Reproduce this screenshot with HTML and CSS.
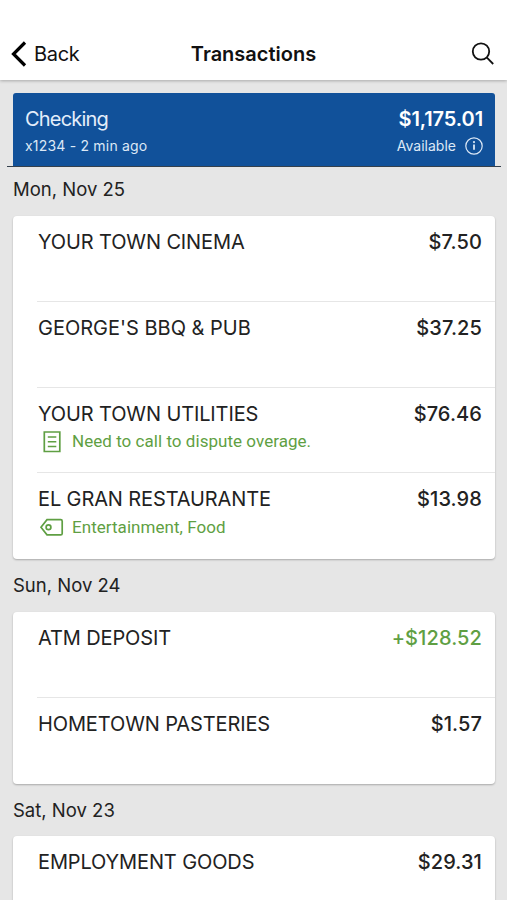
FILE: index.html
```html
<!DOCTYPE html>
<html lang="en">
<head>
<meta charset="utf-8">
<title>Transactions</title>
<link rel="stylesheet" href="styles.css">
</head>
<body>
<header class="topbar">
  <div class="back"><svg width="16" height="26" viewBox="0 0 16 26"><path d="M14 1.5 2.5 13 14 24.5"/></svg><span>Back</span></div>
  <h1>Transactions</h1>
  <svg class="search" width="24" height="24" viewBox="0 0 24 24"><circle cx="10" cy="9.5" r="8.2"/><path d="m15.7 15.3 6.5 6.7"/></svg>
</header>
<main>
  <section class="account">
    <div class="line primary"><span class="name">Checking</span><strong>$1,175.01</strong></div>
    <div class="line secondary"><span class="updated">x1234 - 2 min ago</span><span class="available"><span>Available</span><svg width="18" height="18" viewBox="0 0 18 18"><circle cx="9" cy="9" r="8.2"/><path class="stem" d="M9 7.5v5.3"/><circle class="dot" cx="9" cy="5.1" r="1.1"/></svg></span></div>
  </section>
  <h2 class="first">Mon, Nov 25</h2>
  <section class="card">
    <article><div class="entry"><span>YOUR TOWN CINEMA</span><strong>$7.50</strong></div></article>
    <article><div class="entry"><span class="wide">GEORGE'S BBQ &amp; PUB</span><strong>$37.25</strong></div></article>
    <article><div class="entry"><span>YOUR TOWN UTILITIES</span><strong>$76.46</strong></div>
      <div class="note"><svg width="28" height="24" viewBox="0 0 28 24"><path d="M6.3 3h15.5v19.5H6.3z"/><path class="rules" d="M9.8 8h8.5M9.8 12.7h8.5M9.8 17.4h8.5"/></svg><span>Need to call to dispute overage.</span></div></article>
    <article><div class="entry"><span>EL GRAN RESTAURANTE</span><strong>$13.98</strong></div>
      <div class="note tags"><svg width="28" height="24" viewBox="0 0 28 24"><path d="M9 4.7h13.7q1.5 0 1.5 1.5v12.2q0 1.5-1.5 1.5H9L3 12.3z"/><circle cx="10.5" cy="12.3" r="2.4"/></svg><span>Entertainment, Food</span></div></article>
  </section>
  <h2>Sun, Nov 24</h2>
  <section class="card">
    <article><div class="entry"><span>ATM DEPOSIT</span><strong class="credit">+$128.52</strong></div></article>
    <article><div class="entry"><span>HOMETOWN PASTERIES</span><strong>$1.57</strong></div></article>
  </section>
  <h2>Sat, Nov 23</h2>
  <section class="card">
    <article><div class="entry"><span>EMPLOYMENT GOODS</span><strong>$29.31</strong></div></article>
  </section>
</main>
</body>
</html>
```
FILE: styles.css
```css
*{box-sizing:border-box}
body{margin:0;height:900px;overflow:hidden;background:#e6e6e6;color:#222;font-family:Inter,"Liberation Sans",sans-serif}
svg{display:block;flex:none;fill:none;stroke:currentColor;stroke-width:1.7}
.topbar{height:80px;padding:27px 12px 0 11px;background:#fff;box-shadow:0 1px 3px #0004;display:grid;grid-template-columns:1fr auto 1fr;align-items:center;color:#111}
.back{display:flex;align-items:center;gap:7px;font-size:20px;letter-spacing:-.3px}
.back svg{stroke-width:3.2;color:#000}
h1{margin:0 0 0 1px;font-size:20px;font-weight:600}
.search{justify-self:end;stroke-width:1.8}
main{padding:13px 12px 0 13px}
.account{position:relative;height:73px;padding:13px 12px 0;color:#fff;background:#11519a;border-radius:3px 3px 0 0}
.account::after{content:"";position:absolute;left:-6px;right:-6px;bottom:-1px;height:1px;background:#34404c}
.line{display:flex;justify-content:space-between;align-items:center}
.primary{height:26px;font-size:20px}
.name{letter-spacing:-.8px;color:#e4eefa}
.primary strong{letter-spacing:-.1px}
.secondary{height:27px;font-size:14px;color:#dce8f6}
.updated{letter-spacing:.2px}
.available{display:flex;align-items:center;gap:9px}
.available svg{stroke-width:1.2}
.available .stem{stroke-width:1.8}
.available .dot{fill:currentColor;stroke:none}
strong{font-weight:600}
h2{margin:0;height:53px;font-size:18.5px;font-weight:400;line-height:53px;letter-spacing:0}
.first{height:50px;line-height:47px}
.card{background:#fff;border-radius:4px;padding-left:24px;box-shadow:0 1px 2px #0004}
.card + h2 + .card + h2{height:52px;line-height:52px}
article{height:85.75px;padding:13px 13px 0 0;border-bottom:1px solid #e6e6e6}
article:last-child{border-bottom-color:transparent}
.entry{height:26px;padding-left:1px;display:flex;justify-content:space-between;align-items:center;font-size:20px;letter-spacing:-.12px}
.wide{letter-spacing:0}
.entry strong{font-weight:500;letter-spacing:.1px}
.entry .credit{color:#5f9f43}
.note{display:flex;align-items:center;gap:6px;height:28px;padding-left:1px;color:#5f9f43;font-family:Roboto,Inter,sans-serif;font-size:17px;letter-spacing:.04px}
.tags{height:30px}
.rules{stroke-width:1.5}
```
